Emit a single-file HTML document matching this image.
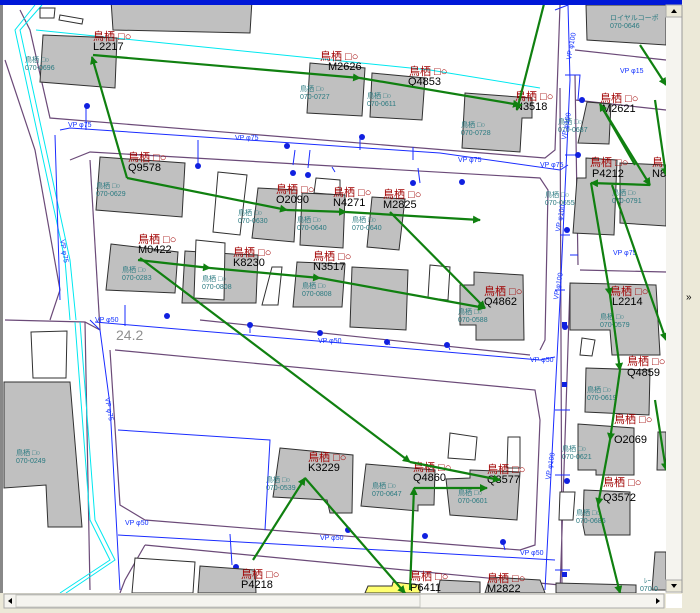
<!DOCTYPE html>
<html><head><meta charset="utf-8"><style>
html,body{margin:0;padding:0;width:700px;height:613px;overflow:hidden;background:#ece9d8;}
svg{display:block}
.r{fill:#a00000;font-family:"Liberation Sans","Noto Sans CJK JP",sans-serif;font-size:11px}
.k{fill:#000;font-family:"Liberation Sans",sans-serif;font-size:11px}
.t{fill:#2a7a80;font-family:"Liberation Sans","Noto Sans CJK JP",sans-serif;font-size:7px}
.b{fill:#1030ff;font-family:"Liberation Sans",sans-serif;font-size:7px}
.g{fill:#c0c0c0;stroke:#303030;stroke-width:1}
.w{fill:#fff;stroke:#303030;stroke-width:1}
.p{fill:none;stroke:#6b4a78;stroke-width:1.2}
.c{fill:none;stroke:#00e8f0;stroke-width:1}
.bl{fill:none;stroke:#1a2cff;stroke-width:1}
.a{fill:none;stroke:#108010;stroke-width:2.2}
.d{fill:#1020e0}
</style></head><body>
<svg width="700" height="613" viewBox="0 0 700 613" xmlns="http://www.w3.org/2000/svg">
<defs><marker id="m" markerWidth="8" markerHeight="8" refX="7" refY="4" orient="auto" markerUnits="userSpaceOnUse"><path d="M0,0 L8,4 L0,8 z" fill="#108010"/></marker></defs>
<rect x="0" y="0" width="666" height="593" fill="#fff"/>
<path class="p" d="M20,10 L30,30 L50,118 L545,158 L555,150 L560,5"/>
<path class="p" d="M5,60 L35,150 L60,290 L50,320"/>
<path class="p" d="M70,160 L90,152 L540,178 L548,190 L545,340 L540,350"/>
<path class="p" d="M90,160 L100,330"/>
<path class="p" d="M200,320 L530,355"/>
<path class="p" d="M5,320 L85,322 L100,330 M85,322 L90,590"/>
<path class="p" d="M115,350 L535,390 L540,420 L535,545 L520,550 L145,520 L120,505 L110,350"/>
<path class="p" d="M145,545 L560,585 M145,545 L125,580 L120,593"/>
<path class="p" d="M560,88 L562,593 M575,75 L578,265 M575,100 L666,110 M575,50 L666,60 M580,270 L666,272 M570,285 L560,593"/>
<path class="c" d="M35,5 L15,30 L65,260 L70,320"/>
<path class="c" d="M42,5 L20,30 L70,260 L76,320"/>
<path class="c" d="M36,30 L430,70 L540,88"/>
<path class="c" d="M75,322 L90,520 L110,560 L60,593 M80,322 L95,520 L115,560 L66,593"/>
<path class="bl" d="M60,130 L70,128 L440,153 L560,170 L568,165"/>
<path class="bl" d="M55,135 L60,300 M90,320 L100,330 L110,405 L120,590"/>
<path class="bl" d="M95,322 L540,360 L555,357"/>
<path class="bl" d="M118,535 L555,560"/>
<path class="bl" d="M555,10 L568,5 L570,80 L560,300 L545,590"/>
<path class="bl" d="M118,430 L270,440 L265,530 M230,534 L232,565 M565,75 L580,75 L578,100 M565,155 L578,155 M570,255 L578,255 M560,235 L570,235 M555,290 L565,290 M555,410 L570,410 M555,475 L570,475 M555,570 L570,570"/>
<path class="bl" d="M86,105 L86,130 M198,140 L198,165 M295,150 L293,165 M310,150 L308,168 M360,136 L360,150 M418,168 L420,183 M413,147 L413,160 M332,167 L335,172 M125,305 L125,326 M250,325 L250,333 M387,340 L390,345 M448,345 L450,350 M570,255 L578,255 M503,542 L505,550"/>
<g class="d">
<circle cx="87" cy="106" r="3"/><circle cx="198" cy="166" r="3"/><circle cx="293" cy="173" r="3"/><circle cx="308" cy="175" r="3"/><circle cx="362" cy="137" r="3"/><circle cx="287" cy="146" r="3"/><circle cx="413" cy="183" r="3"/><circle cx="462" cy="182" r="3"/><circle cx="582" cy="100" r="3"/><circle cx="578" cy="155" r="3"/><circle cx="167" cy="316" r="3"/><circle cx="250" cy="325" r="3"/><circle cx="320" cy="333" r="3"/><circle cx="387" cy="342" r="3"/><circle cx="447" cy="345" r="3"/><circle cx="565" cy="327" r="3"/><circle cx="348" cy="530" r="3"/><circle cx="425" cy="536" r="3"/><circle cx="503" cy="542" r="3"/><circle cx="236" cy="567" r="3"/><circle cx="567" cy="481" r="3"/><circle cx="567" cy="230" r="3"/>
<rect x="562" y="382" width="5" height="5"/><rect x="562" y="572" width="5" height="5"/><rect x="562" y="322" width="5" height="5"/>
</g>
<polygon class="g" points="111,0 252,0 250,33 113,30"/>
<polygon class="w" points="40,8 55,8 54,18 40,18"/>
<polygon class="w" points="60,15 83,19 82,24 59,20"/>
<polygon class="g" points="43,35 117,38 115,88 40,82"/>
<polygon class="g" points="310,63 365,68 362,116 307,113"/>
<polygon class="g" points="372,73 425,78 422,120 370,117"/>
<polygon class="g" points="465,93 532,98 532,118 522,118 520,152 462,148"/>
<polygon class="g" points="586,5 666,5 666,45 587,40"/>
<polygon class="g" points="587,102 611,104 609,144 578,143"/>
<polygon class="g" points="586,158 617,160 614,235 573,233 577,178 586,178"/>
<polygon class="g" points="620,163 666,165 666,226 620,223"/>
<polygon class="g" points="100,157 185,163 182,217 96,210"/>
<polygon class="w" points="218,172 247,175 240,235 213,232"/>
<polygon class="w" points="316,178 340,180 340,195 314,193"/>
<polygon class="g" points="258,188 297,190 294,242 252,238"/>
<polygon class="g" points="302,193 345,195 343,248 300,245"/>
<polygon class="g" points="372,197 405,199 399,250 367,247"/>
<polygon class="g" points="111,244 178,252 175,293 106,290"/>
<polygon class="g" points="185,251 233,254 258,255 256,303 182,303"/>
<polygon class="w" points="272,267 282,267 278,305 262,305"/>
<polygon class="w" points="196,240 225,243 224,300 194,298"/>
<polygon class="g" points="297,262 345,264 342,307 293,307"/>
<polygon class="g" points="352,267 408,270 406,330 350,327"/>
<polygon class="w" points="430,265 450,267 448,300 428,298"/>
<polygon class="g" points="474,272 523,275 524,340 476,340 476,325 460,325 460,285 474,285"/>
<polygon class="g" points="570,283 656,285 660,355 612,355 610,330 570,330"/>
<polygon class="w" points="582,338 595,340 592,356 580,355"/>
<polygon class="g" points="586,368 650,370 649,415 585,412"/>
<polygon class="g" points="578,424 634,428 634,475 596,475 596,470 578,470"/>
<polygon class="g" points="658,432 666,432 666,470 657,470"/>
<polygon class="w" points="560,492 575,492 573,520 559,520"/>
<polygon class="g" points="584,490 630,492 630,535 585,535 583,525"/>
<polygon class="g" points="655,552 666,552 666,590 652,590"/>
<polygon class="w" points="31,332 67,331 66,378 33,378"/>
<polygon class="g" points="4,382 70,382 82,527 48,527 46,485 4,488"/>
<polygon class="g" points="280,448 353,455 352,513 330,513 327,500 273,497"/>
<polygon class="g" points="366,464 435,470 434,505 418,505 418,511 361,506"/>
<polygon class="w" points="450,433 477,437 475,460 448,458"/>
<polygon class="w" points="508,437 520,437 520,468 507,468"/>
<polygon class="g" points="470,470 520,472 517,520 450,515 446,479 470,478"/>
<polygon class="w" points="135,558 195,562 193,593 132,593"/>
<polygon class="g" points="200,566 255,570 256,593 198,593"/>
<polygon points="393,582 420,585 420,593 365,593 368,586 392,586" fill="#ffff70" stroke="#303030"/>
<polygon class="g" points="440,580 480,582 480,593 438,593"/>
<polygon class="g" points="490,577 540,580 545,593 485,593"/>
<polygon class="g" points="556,583 636,585 636,593 556,593"/>
<g class="r">
<text x="93" y="40">鳥栖 □○</text><text x="320" y="60">鳥栖 □○</text><text x="409" y="75">鳥栖 □○</text><text x="515" y="100">鳥栖 □○</text><text x="600" y="102">鳥栖 □○</text><text x="590" y="166">鳥栖 □○</text><text x="652" y="166">鳥</text>
<text x="128" y="161">鳥栖 □○</text><text x="276" y="193">鳥栖 □○</text><text x="333" y="196">鳥栖 □○</text><text x="383" y="198">鳥栖 □○</text>
<text x="138" y="243">鳥栖 □○</text><text x="233" y="256">鳥栖 □○</text><text x="313" y="260">鳥栖 □○</text><text x="484" y="295">鳥栖 □○</text>
<text x="610" y="295">鳥栖 □○</text><text x="627" y="365">鳥栖 □○</text><text x="614" y="423">鳥栖 □○</text><text x="603" y="486">鳥栖 □○</text>
<text x="308" y="461">鳥栖 □○</text><text x="413" y="471">鳥栖 □○</text><text x="487" y="473">鳥栖 □○</text>
<text x="241" y="578">鳥栖 □○</text><text x="410" y="580">鳥栖 □○</text><text x="487" y="582">鳥栖 □○</text>
</g>
<g class="k">
<text x="93" y="50">L2217</text><text x="328" y="70">M2626</text><text x="408" y="85">Q4853</text><text x="515" y="110">N3518</text><text x="602" y="112">M2621</text><text x="592" y="177">P4212</text><text x="652" y="177">N8</text>
<text x="128" y="171">Q9578</text><text x="276" y="203">O2090</text><text x="333" y="206">N4271</text><text x="383" y="208">M2825</text>
<text x="138" y="253">M0422</text><text x="233" y="266">K8230</text><text x="313" y="270">N3517</text><text x="484" y="305">Q4862</text>
<text x="612" y="305">L2214</text><text x="627" y="376">Q4859</text><text x="614" y="443">O2069</text><text x="603" y="501">Q3572</text>
<text x="308" y="471">K3229</text><text x="413" y="481">Q4860</text><text x="487" y="483">Q3577</text>
<text x="241" y="588">P4218</text><text x="410" y="591">P6411</text><text x="487" y="592">M2822</text>
</g>
<text x="116" y="340" font-family="Liberation Sans,sans-serif" font-size="14" fill="#909090">24.2</text>
<g class="t">
<text x="610" y="20">ロイヤルコーポ</text><text x="610" y="28">070-0646</text>
<text x="25" y="62">鳥栖 □○</text><text x="25" y="70">070-0696</text>
<text x="300" y="91">鳥栖 □○</text><text x="300" y="99">070-0727</text>
<text x="367" y="98">鳥栖 □○</text><text x="367" y="106">070-0611</text>
<text x="461" y="127">鳥栖 □○</text><text x="461" y="135">070-0728</text>
<text x="558" y="124">鳥栖 □○</text><text x="558" y="132">070-0687</text>
<text x="545" y="197">鳥栖 □○</text><text x="545" y="205">070-0655</text>
<text x="612" y="195">鳥栖 □○</text><text x="612" y="203">070-0791</text>
<text x="96" y="188">鳥栖 □○</text><text x="96" y="196">070-0629</text>
<text x="238" y="215">鳥栖 □○</text><text x="238" y="223">070-0630</text>
<text x="297" y="222">鳥栖 □○</text><text x="297" y="230">070-0640</text>
<text x="352" y="222">鳥栖 □○</text><text x="352" y="230">070-0640</text>
<text x="122" y="272">鳥栖 □○</text><text x="122" y="280">070-0283</text>
<text x="202" y="281">鳥栖 □○</text><text x="202" y="289">070-0808</text>
<text x="302" y="288">鳥栖 □○</text><text x="302" y="296">070-0808</text>
<text x="458" y="314">鳥栖 □○</text><text x="458" y="322">070-0588</text>
<text x="600" y="319">鳥栖 □○</text><text x="600" y="327">070-0579</text>
<text x="587" y="392">鳥栖 □○</text><text x="587" y="400">070-0619</text>
<text x="562" y="451">鳥栖 □○</text><text x="562" y="459">070-0621</text>
<text x="576" y="515">鳥栖 □○</text><text x="576" y="523">070-0686</text>
<text x="16" y="455">鳥栖 □○</text><text x="16" y="463">070-0249</text>
<text x="266" y="482">鳥栖 □○</text><text x="266" y="490">070-0539</text>
<text x="372" y="488">鳥栖 □○</text><text x="372" y="496">070-0647</text>
<text x="458" y="495">鳥栖 □○</text><text x="458" y="503">070-0601</text>
<text x="644" y="583">ﾚｰ</text><text x="640" y="591">070-0</text>
</g>
<g class="b">
<text x="68" y="127">VP φ75</text><text x="235" y="140">VP φ75</text><text x="458" y="162">VP φ75</text><text x="540" y="167">VP φ75</text><text x="620" y="73">VP φ15</text><text x="613" y="255">VP φ75</text>
<text x="95" y="322">VP φ50</text><text x="318" y="343">VP φ50</text><text x="530" y="362">VP φ50</text>
<text x="125" y="525">VP φ50</text><text x="320" y="540">VP φ50</text><text x="520" y="555">VP φ50</text>
<text transform="translate(571,60) rotate(-80)">VP φ100</text><text transform="translate(566,140) rotate(-80)">VP φ100</text><text transform="translate(560,232) rotate(-80)">VP φ100</text><text transform="translate(558,300) rotate(-80)">VP φ100</text><text transform="translate(550,480) rotate(-80)">VP φ100</text>
<text transform="translate(60,240) rotate(80)">VP φ75</text><text transform="translate(105,398) rotate(80)">VP φ75</text>
</g>
<g class="a" marker-end="url(#m)">
<path d="M93,55 L360,78"/><path d="M360,78 L520,105"/><path d="M545,0 L517,110"/>
<path d="M127,178 L92,57"/><path d="M127,178 L287,210"/><path d="M287,210 L346,212"/><path d="M346,212 L480,220"/>
<path d="M390,212 L485,308"/>
<path d="M138,260 L210,268"/><path d="M210,268 L320,278"/><path d="M320,278 L485,308"/>
<path d="M655,100 L666,175"/><path d="M640,45 L666,85"/>
<path d="M635,165 L600,104"/><path d="M600,104 L650,185"/><path d="M650,185 L591,183"/>
<path d="M591,183 L610,295"/><path d="M610,295 L620,370"/><path d="M620,370 L610,440"/><path d="M610,440 L598,505"/><path d="M598,505 L620,593"/>
<path d="M612,185 L666,340"/><path d="M655,400 L666,470"/>
<path d="M140,258 L410,462"/><path d="M410,462 L500,480"/>
<path d="M253,560 L305,478"/><path d="M305,478 L405,593"/>
<path d="M410,590 L414,488"/><path d="M414,488 L487,488"/>
</g>
<rect x="0" y="0" width="700" height="5" fill="#0018d8"/>
<rect x="0" y="5" width="3" height="588" fill="#888"/>
<rect x="666" y="5" width="16" height="588" fill="#f5f4ef"/>
<rect x="666" y="5" width="16" height="12" fill="#ece9d8" stroke="#aaa"/>
<path d="M671,13 L677,13 L674,9 z" fill="#000"/>
<rect x="666" y="580" width="16" height="12" fill="#ece9d8" stroke="#aaa"/>
<path d="M671,584 L677,584 L674,588 z" fill="#000"/>
<rect x="682" y="0" width="18" height="613" fill="#ece9d8"/>
<line x1="682" y1="5" x2="682" y2="593" stroke="#999"/>
<text x="686" y="300" font-family="Liberation Sans,sans-serif" font-size="10" fill="#000">»</text>
<rect x="0" y="593" width="682" height="20" fill="#ece9d8"/>
<rect x="4" y="594" width="660" height="14" fill="#f5f4ef" stroke="#aaa"/>
<rect x="16" y="595" width="404" height="12" fill="#f5f4ef" stroke="#c8c8c0"/>
<path d="M12,598 L12,604 L8,601 z" fill="#000"/>
<path d="M656,598 L656,604 L660,601 z" fill="#000"/>
<rect x="666" y="594" width="16" height="14" fill="#fff"/>
</svg>
</body></html>
